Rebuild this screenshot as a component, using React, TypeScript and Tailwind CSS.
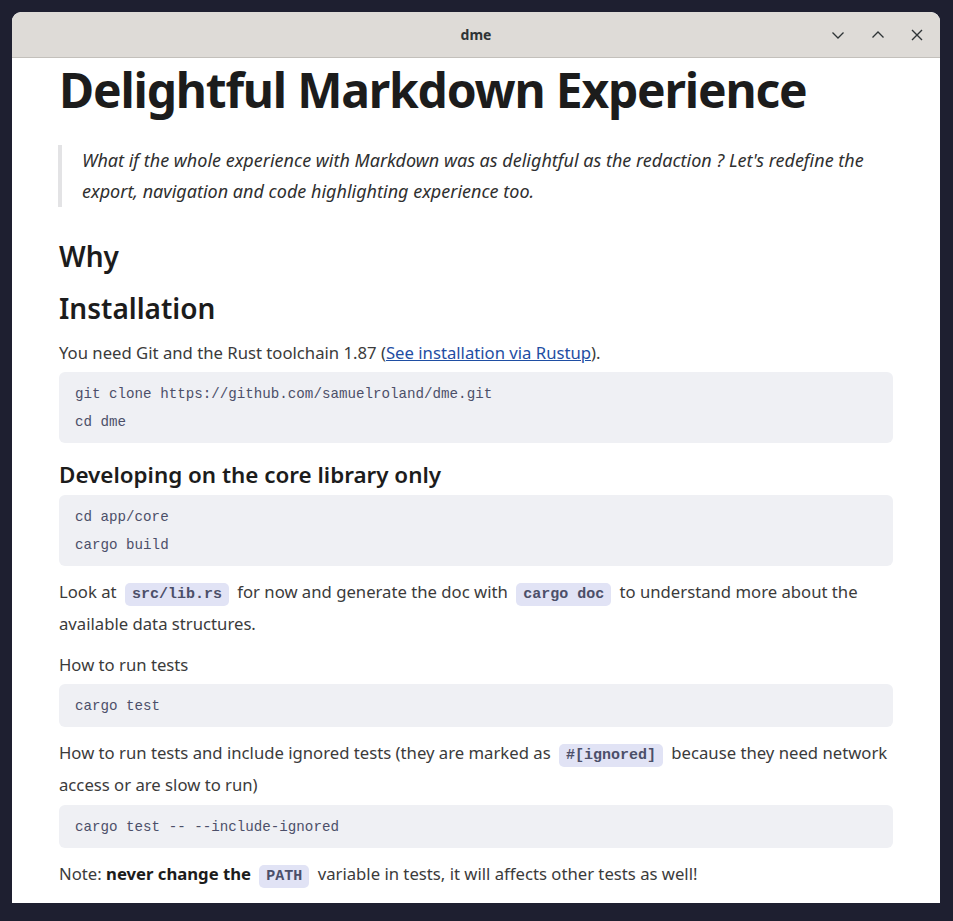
import React from 'react'

const sans = "font-['Noto_Sans','Open_Sans',sans-serif]"
const mono = "font-['Liberation_Mono','DejaVu_Sans_Mono',monospace]"

const Code = ({ children }: { children: React.ReactNode }) => (
  <code
    className={`${mono} mx-[4px] rounded-[5px] bg-[#e1e3f5] px-[7px] py-[3px] text-[15px] leading-none font-bold text-[#4c4f69]`}
  >
    {children}
  </code>
)

const Block = ({ lines, className = '' }: { lines: string[]; className?: string }) => (
  <pre
    className={`${mono} rounded-[6px] bg-[#eff0f4] px-4 pt-2 pb-[7px] text-[14.2px] leading-[28px] text-[#4c4f69] ${className}`}
  >
    {lines.map((l) => (
      <div key={l}>{l}</div>
    ))}
  </pre>
)

const TitleBar = () => (
  <div className="relative flex h-[46px] shrink-0 items-center justify-center rounded-t-[9px] border-b border-[#c3c0bb] bg-[#dedbd7]">
    <span className={`${sans} text-[14px] font-bold text-[#2e3436]`}>dme</span>
    <div className="absolute right-[16px] top-0 flex h-full items-center gap-[24px] text-[#2e3436]">
      <svg width="16" height="16" viewBox="0 0 16 16" fill="none" stroke="currentColor" strokeWidth="1.3">
        <path d="M2.5 5.5 8 11l5.5-5.5" />
      </svg>
      <svg width="16" height="16" viewBox="0 0 16 16" fill="none" stroke="currentColor" strokeWidth="1.3">
        <path d="M2.5 10.5 8 5l5.5 5.5" />
      </svg>
      <svg width="14" height="14" viewBox="0 0 14 14" fill="none" stroke="currentColor" strokeWidth="1.4">
        <path d="M2 2l10 10M12 2 2 12" />
      </svg>
    </div>
  </div>
)

export default function App() {
  return (
    <div className="h-[921px] w-[953px] overflow-hidden bg-[#1e1f30] pl-3 pt-3">
      <div className="flex h-[891px] w-[928px] flex-col overflow-hidden rounded-t-[9px] bg-white">
        <TitleBar />
        <div className={`${sans} px-[47px] pt-[2px] text-[16.7px] leading-[32px] text-[#3b3b3b]`}>
          <h1 className="text-[48px] font-bold leading-[60px] tracking-[-1.2px] text-[#1c1c1c]">
            Delightful Markdown Experience
          </h1>
          <blockquote className="-ml-px mt-[25px] border-l-4 border-[#e3e3e5] pl-5 text-[18px] italic leading-[31px] whitespace-nowrap text-[#2f2f2f]">
            What if the whole experience with Markdown was as delightful as the redaction ? Let's redefine the
            <br />
            export, navigation and code highlighting experience too.
          </blockquote>
          <h2 className="mt-[29px] text-[28px] font-semibold leading-[40px] text-[#1c1c1c]">Why</h2>
          <h2 className="mt-[12px] text-[28px] font-semibold leading-[40px] text-[#1c1c1c]">Installation</h2>
          <p className="mt-[9px]">
            You need Git and the Rust toolchain 1.87 (
            <a href="#" className="text-[#1f4ea3] underline">
              See installation via Rustup
            </a>
            ).
          </p>
          <Block className="mt-[3px]" lines={['git clone https://github.com/samuelroland/dme.git', 'cd dme']} />
          <h3 className="mt-[16px] text-[22.4px] font-semibold leading-[32px] text-[#1c1c1c]">
            Developing on the core library only
          </h3>
          <Block className="mt-[4px]" lines={['cd app/core', 'cargo build']} />
          <p className="mt-[10px] whitespace-nowrap">
            Look at <Code>src/lib.rs</Code> for now and generate the doc with <Code>cargo doc</Code> to understand
            more about the
            <br />
            available data structures.
          </p>
          <p className="mt-[9px]">How to run tests</p>
          <Block className="mt-[3px]" lines={['cargo test']} />
          <p className="mt-[10px] whitespace-nowrap">
            How to run tests and include ignored tests (they are marked as <Code>#[ignored]</Code> because they
            need network
            <br />
            access or are slow to run)
          </p>
          <Block className="mt-[4px]" lines={['cargo test -- --include-ignored']} />
          <p className="mt-[10px]">
            Note: <strong className="font-bold text-[#1c1c1c]">never change the</strong> <Code>PATH</Code> variable
            in tests, it will affects other tests as well!
          </p>
        </div>
      </div>
    </div>
  )
}
